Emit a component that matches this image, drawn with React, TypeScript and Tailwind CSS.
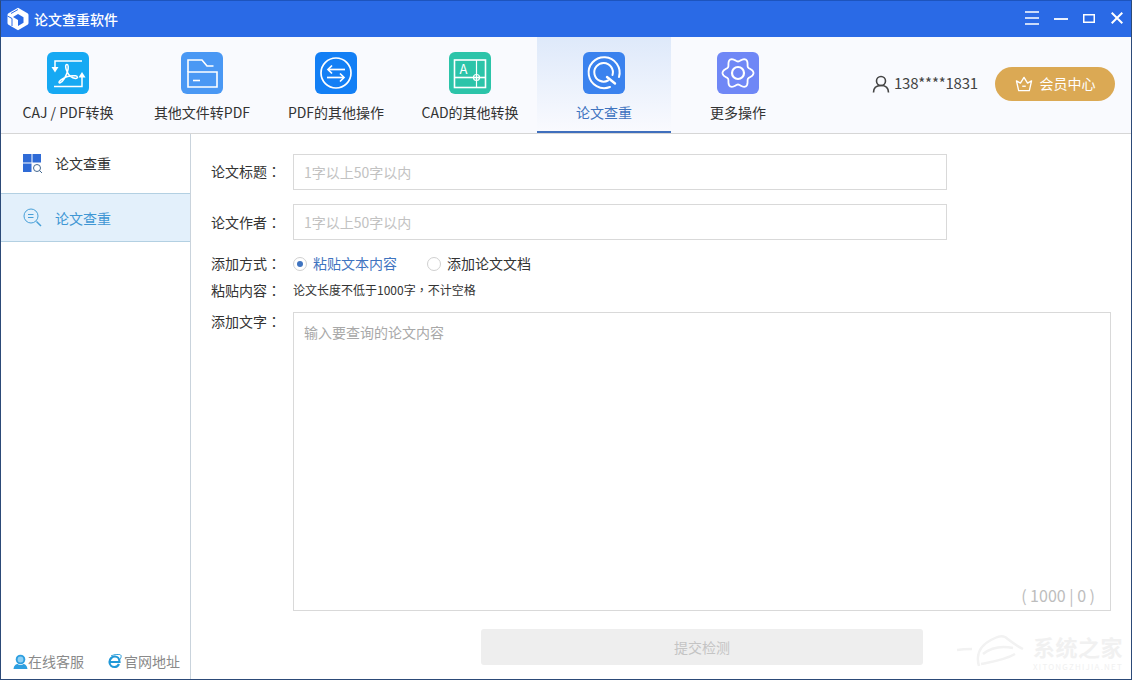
function PdfIcon() {
  return (
    <svg viewBox="0 0 42 42" className="w-[42px] h-[42px]" fill="none" stroke="#fff" strokeWidth="1.500">
      <path d="M8 16V9h27" />
      <path d="M4.500 15h7L8 20.500z" fill="#fff" stroke="none" />
      <path d="M7 34.500h28V25" />
      <path d="M31.500 25.500h7L35 20z" fill="#fff" stroke="none" />
      <path d="M20 12.500c-2 0-1.500 4 0 7 1.500 3.500 5 6.500 8.500 7 2.500.3 2.500-2.500 0-2.700-5-.5-11 1.300-14.500 4-2.500 2-2.500 3.500-.8 3 2.500-.8 6-6.500 7.500-12 .8-3 .8-6.300-.7-6.300z" />
    </svg>
  );
}

function FolderIcon() {
  return (
    <svg viewBox="0 0 42 42" className="w-[42px] h-[42px]" fill="none" stroke="#fff" strokeWidth="1.600">
      <path d="M7 20V8h14l5 6h6.500" />
      <path d="M7 20h29v15H7z" />
      <path d="M12 28.500h7" />
    </svg>
  );
}

function SwapIcon() {
  return (
    <svg viewBox="0 0 42 42" className="w-[42px] h-[42px]" fill="none" stroke="#fff" strokeWidth="1.700">
      <circle cx="21" cy="21" r="15" />
      <path d="M30 17.500H13" />
      <path d="M17 13.500l-4 4 4 4" />
      <path d="M12 25.500h17" />
      <path d="M25 21.500l4 4-4 4" />
    </svg>
  );
}

function CadIcon() {
  return (
    <svg viewBox="0 0 42 42" className="w-[42px] h-[42px]" fill="none" stroke="#fff" strokeWidth="1.600">
      <rect x="5.500" y="8" width="31" height="27.500" />
      <path d="M5.500 25.500h31" />
      <path d="M27.500 8v27.500" strokeWidth="1.200" />
      <circle cx="27.500" cy="25.500" r="3" strokeWidth="1.200" />
      <text x="10.500" y="22" fontSize="13" fill="#fff" stroke="none">A</text>
    </svg>
  );
}

function CheckIcon() {
  return (
    <svg viewBox="0 0 42 42" className="w-[42px] h-[42px]" fill="none" stroke="#fff" strokeWidth="2" strokeLinecap="round">
      <path d="M27 35A15.500 15.500 0 1 1 36 25" />
      <path d="M25 28.500A9.300 9.300 0 1 1 29.500 23" />
      <path d="M24 25l8 6.500" strokeWidth="2.400" />
    </svg>
  );
}

// six rounded lobes, easier to compute than to write by hand
const gearPath =
  Array.from({ length: 120 }, (_, i) => {
    const a = (i / 120) * Math.PI * 2;
    const r = 13.5 + 2 * Math.cos(6 * a);
    return `${i === 0 ? "M" : "L"}${(21 + r * Math.cos(a)).toFixed(2)} ${(21 + r * Math.sin(a)).toFixed(2)}`;
  }).join(" ") + "z";

function GearIcon() {
  return (
    <svg viewBox="0 0 42 42" className="w-[42px] h-[42px]" fill="none" stroke="#fff" strokeWidth="1.800">
      <path d={gearPath} />
      <circle cx="21" cy="21" r="6" strokeWidth="2.200" />
    </svg>
  );
}

function Logo() {
  return (
    <svg viewBox="0 0 22 24" className="w-[22px] h-[24px]">
      <path d="M11 .8l9.500 5.500q1 .6 1 1.700v8q0 1.100-1 1.700L11 23.200 1.500 17.700q-1-.6-1-1.700V8q0-1.100 1-1.700z" fill="#fff" />
      <path d="M11 7l5.500 3.200v5.600L11 19V13l-5-3z" fill="#2a6ae6" />
      <path d="M4 6.500L11 2.500M.5 9L5 11.500V19" stroke="#2a6ae6" strokeWidth="1" fill="none" />
    </svg>
  );
}

function Crown() {
  return (
    <svg viewBox="0 0 20 18" className="w-[18px] h-[16px]" fill="none" stroke="#fff" strokeWidth="1.500" strokeLinejoin="round">
      <path d="M1.500 5.500l4.500 2.500L10 1.500 14 8l4.500-2.500L16 16.500H4z" />
      <path d="M8 11.500h4" />
    </svg>
  );
}

function GridSearch() {
  return (
    <svg viewBox="0 0 20 20" className="w-[20px] h-[20px]">
      <rect x="0" y="0" width="8.500" height="8.500" fill="#2f6bd6" />
      <rect x="9.500" y="0" width="8.500" height="8.500" fill="#2f6bd6" />
      <rect x="0" y="9.500" width="8.500" height="8.500" fill="#2f6bd6" />
      <circle cx="14" cy="14" r="3.500" fill="#fff" stroke="#44688f" strokeWidth="1" />
      <path d="M16.500 16.500l2.500 2.500" stroke="#44688f" strokeWidth="1" />
    </svg>
  );
}

function ZoomOut() {
  return (
    <svg viewBox="0 0 20 20" className="w-[20px] h-[20px]" fill="none" stroke="#48a0d8" strokeWidth="1">
      <circle cx="8" cy="8" r="7" />
      <path d="M5 6.500h5.500M5 9.500h5.500" />
      <path d="M13.500 13.500l4.500 4.500" strokeWidth="1.500" />
    </svg>
  );
}

function Agent() {
  return (
    <svg viewBox="0 0 15 15" className="w-[15px] h-[15px]">
      <circle cx="7.500" cy="5.500" r="4.800" fill="#2e9fe0" />
      <circle cx="7.500" cy="5.500" r="2.900" fill="#8fd0f4" />
      <path d="M0.500 15c.500-4 3-5 4-5 1.500 1.200 4.500 1.200 6 0 1 0 3.500 1 4 5z" fill="#2e9fe0" />
    </svg>
  );
}

function Ie() {
  return (
    <svg viewBox="0 0 15 15" className="w-[15px] h-[15px]" fill="none" stroke="#2098d8">
      <path d="M3 8h9.500C12.500 4 10 2.500 8 2.500 5 2.500 2.500 5 2.500 8c0 3 2.500 5 5 5 2 0 3.600-1 4.500-3" strokeWidth="2.200" />
      <path d="M4 2C7 .500 13 -.500 14 1.500c.500 1.500-.500 3-1 4" strokeWidth="1" />
    </svg>
  );
}

function Colon() {
  return <span className="font-['Noto_Sans_CJK_TC',sans-serif]">：</span>;
}

const tabs = [
  { label: "CAJ / PDF转换", bg: "bg-[#16a9f3]", icon: <PdfIcon /> },
  { label: "其他文件转PDF", bg: "bg-[#4a98f4]", icon: <FolderIcon /> },
  { label: "PDF的其他操作", bg: "bg-[#137ff5]", icon: <SwapIcon /> },
  { label: "CAD的其他转换", bg: "bg-[#2cc4a9]", icon: <CadIcon /> },
  { label: "论文查重", bg: "bg-[#3a82ee]", icon: <CheckIcon />, active: true },
  { label: "更多操作", bg: "bg-[#6f87f6]", icon: <GearIcon /> },
];

export default function App() {
  return (
    <div className="w-[1132px] h-[680px] flex flex-col overflow-hidden relative border border-[#2c4a78] border-t-[#1d54bd] bg-white font-['Noto_Sans_CJK_SC',sans-serif] text-[14px] text-[#333]">
      {/* title bar */}
      <div className="h-[36px] flex items-center bg-[#2a6ae6] text-white shrink-0">
        <div className="ml-[6px] mr-[5px]">
          <Logo />
        </div>
        <span className="font-medium">论文查重软件</span>
        <div className="ml-auto flex items-center mr-[8px] mb-[2px]">
          <svg viewBox="0 0 14 14" className="w-[14px] h-[14px]" stroke="#fff" strokeWidth="1.600">
            <path d="M0 1h14M0 7h14M0 13h14" />
          </svg>
          <svg viewBox="0 0 14 14" className="w-[14px] h-[14px] ml-[15px] mt-[2px]" stroke="#fff" strokeWidth="1.800">
            <path d="M0 7h14" />
          </svg>
          <svg viewBox="0 0 12 9" className="w-[12px] h-[9px] ml-[15px]" fill="none" stroke="#fff" strokeWidth="1.500">
            <rect x=".75" y=".75" width="10.500" height="7.500" />
          </svg>
          <svg viewBox="0 0 12 12" className="w-[12px] h-[12px] ml-[16px]" stroke="#fff" strokeWidth="2">
            <path d="M.7.7l10.600 10.600M11.300.7L.7 11.300" />
          </svg>
        </div>
      </div>

      {/* toolbar */}
      <div className="h-[97px] flex items-stretch bg-[#f9fafe] border-b border-[#d6d6d6] shrink-0">
        {tabs.map((t) => (
          <div
            key={t.label}
            className={`w-[134px] flex flex-col items-center pt-[15px] ${
              t.active ? "bg-gradient-to-b from-[#dee9fa] to-[#f9fafe] border-b-2 border-[#3f6fbd]" : ""
            }`}
          >
            <div className={`w-[42px] h-[42px] rounded-[6px] ${t.bg}`}>{t.icon}</div>
            <span className={`mt-[8px] whitespace-nowrap ${t.active ? "text-[#3f74c0]" : "text-[#333]"}`}>{t.label}</span>
          </div>
        ))}
        <div className="ml-auto flex items-center mr-[16px] mt-[-3px]">
          <svg viewBox="0 0 18 18" className="w-[18px] h-[18px] mr-[4px]" fill="none" stroke="#444" strokeWidth="1.600">
            <circle cx="9" cy="6" r="4.500" />
            <path d="M1.500 17.500c0-5 3-7 7.500-7s7.500 2 7.500 7" />
          </svg>
          <span className="text-[15px] text-[#444] tracking-[-0.2px]">138****1831</span>
          <div className="ml-[17px] w-[120px] h-[34px] rounded-full bg-[#dba954] flex items-center justify-center gap-[7px] text-white">
            <Crown />
            <span>会员中心</span>
          </div>
        </div>
      </div>

      <div className="flex-1 flex min-h-0">
        {/* sidebar */}
        <div className="w-[190px] shrink-0 flex flex-col border-r border-[#c9d3dc]">
          <div className="h-[59px] flex items-center pl-[22px] gap-[12px] text-[#333]">
            <GridSearch />
            <span>论文查重</span>
          </div>
          <div className="h-[49px] flex items-center pl-[22px] gap-[12px] bg-[#e3f0fb] border-y border-[#b3d0e2] text-[#3f97d4]">
            <ZoomOut />
            <span className="pt-[2px]">论文查重</span>
          </div>
          <div className="mt-auto mb-[7px] flex items-center pl-[12px] text-[#8a8a8a]">
            <Agent />
            <span>在线客服</span>
            <span className="ml-[23px] mr-[2px]">
              <Ie />
            </span>
            <span>官网地址</span>
          </div>
        </div>

        {/* form */}
        <div className="flex-1 pl-[20px] pr-[20px] pt-[20px]">
          <div className="flex items-center h-[36px]">
            <span className="w-[82px] shrink-0 pb-[2px]">论文标题<Colon /></span>
            <input
              className="w-[654px] h-[36px] border border-[#d9d9d9] px-[10px] outline-none placeholder:text-[#c2c2c2]"
              placeholder="1字以上50字以内"
            />
          </div>
          <div className="flex items-center h-[36px] mt-[14px]">
            <span className="w-[82px] shrink-0">论文作者<Colon /></span>
            <input
              className="w-[654px] h-[36px] border border-[#d9d9d9] px-[10px] outline-none placeholder:text-[#c2c2c2]"
              placeholder="1字以上50字以内"
            />
          </div>
          <div className="flex items-center h-[20px] mt-[14px]">
            <span className="w-[82px] shrink-0 pb-[2px]">添加方式<Colon /></span>
            <span className="w-[14px] h-[14px] rounded-full border border-[#d0d0d0] flex items-center justify-center">
              <span className="w-[6px] h-[6px] rounded-full bg-[#3f74c0]" />
            </span>
            <span className="ml-[6px] pb-[2px] text-[#3f74c0]">粘贴文本内容</span>
            <span className="ml-[30px] w-[14px] h-[14px] rounded-full border border-[#d0d0d0]" />
            <span className="ml-[6px] pb-[2px]">添加论文文档</span>
          </div>
          <div className="flex items-center h-[20px] mt-[6px]">
            <span className="w-[82px] shrink-0">粘贴内容<Colon /></span>
            <span className="text-[12px]">论文长度不低于1000字<span className="font-['Noto_Sans_CJK_TC',sans-serif]">，</span>不计空格</span>
          </div>
          <div className="flex mt-[12px]">
            <span className="w-[82px] shrink-0 leading-[18px]">添加文字<Colon /></span>
            <div className="relative w-[818px] h-[299px]">
              <textarea
                className="w-full h-full block border border-[#d9d9d9] px-[10px] pt-[9px] pb-[10px] resize-none outline-none placeholder:text-[#a8a8a8]"
                placeholder="输入要查询的论文内容"
              />
              <span className="absolute right-[16px] bottom-[4px] text-[16px] text-[#bdbdbd]">( 1000 | 0 )</span>
            </div>
          </div>
          <div className="mt-[18px] ml-[270px] w-[442px] h-[36px] rounded-[3px] bg-[#eeeeee] flex items-center justify-center text-[#c4c4c4]">
            提交检测
          </div>
        </div>
      </div>

      {/* watermark */}
      <svg viewBox="0 0 70 44" className="absolute right-[104px] bottom-[9px] w-[70px] h-[44px] pointer-events-none" fill="none" stroke="#f2f2f2" strokeWidth="2.500">
        <path d="M0 24c6-1 10-1 15-1M22 40c-3-10 0-20 12-26 6-3 10-5 14-3 4 3 10 8 18 12" />
        <path d="M26 28c10-8 20-8 30-6M24 38c10-2 24-4 34-10" />
      </svg>
      <div className="absolute right-[8px] bottom-[7px] flex flex-col items-end text-[#f1f1f1] pointer-events-none">
        <span className="text-[22px] leading-[26px] font-bold tracking-[0.500px]">系统之家</span>
        <span className="text-[8px] leading-[10px] mt-[3px] tracking-[1.200px]">XITONGZHIJIA.NET</span>
      </div>
    </div>
  );
}
